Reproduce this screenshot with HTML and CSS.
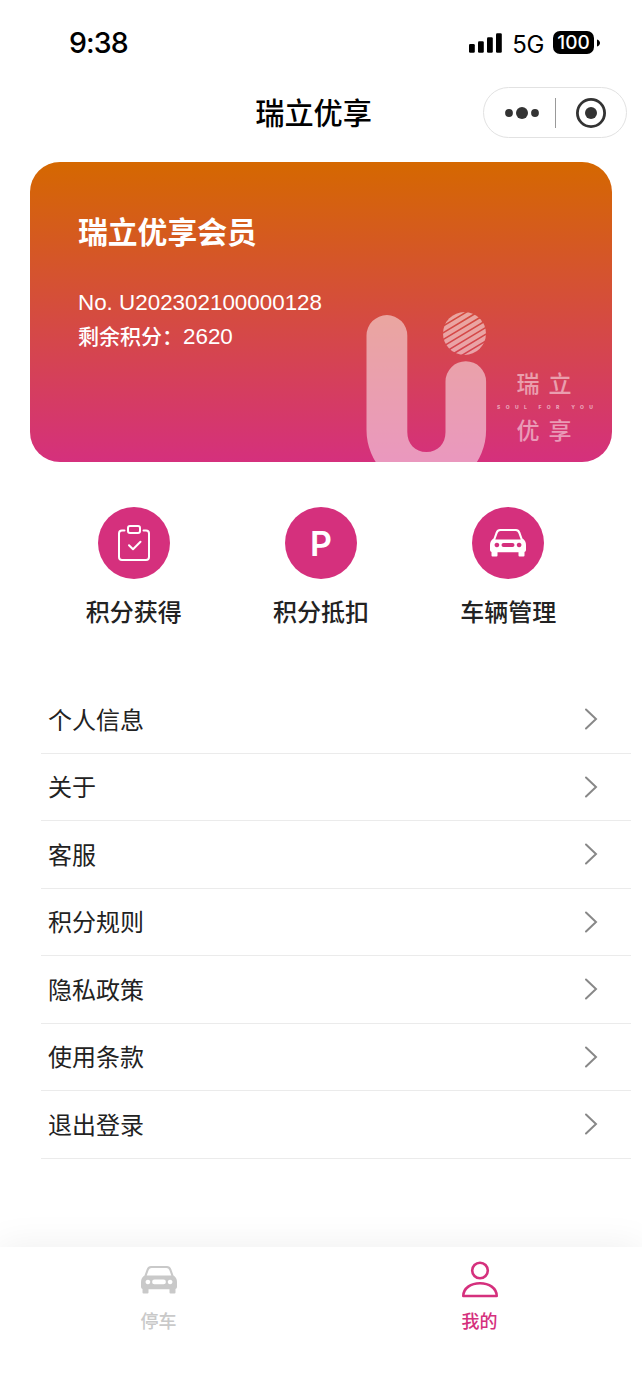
FILE: index.html
```
<!DOCTYPE html>
<html lang="zh-CN">
<head>
  <meta charset="UTF-8">
  <meta name="viewport" content="width=device-width, initial-scale=1.0">
  <title>瑞立优享</title>
  <link rel="stylesheet" href="styles.css">
</head>
<body>

<!-- Status bar -->
<div class="status-bar">
  <div class="time">9:38</div>
  <div class="status-icons">
    <svg class="signal" width="33" height="20" viewBox="0 0 33 20">
      <rect x="0" y="11" width="5.8" height="8.7" rx="1.3"/>
      <rect x="9" y="8.2" width="5.8" height="11.5" rx="1.3"/>
      <rect x="18" y="4.3" width="5.8" height="15.4" rx="1.3"/>
      <rect x="27" y="0.2" width="5.8" height="19.5" rx="1.3"/>
    </svg>
    <span class="network">5G</span>
    <span class="battery">100</span>
    <svg class="battery-tip" width="3" height="8" viewBox="0 0 3 8"><path d="M0 0.5C4 1.8 4 6.2 0 7.5Z"/></svg>
  </div>
</div>

<!-- Nav bar -->
<div class="nav-bar">
  <h1 class="nav-title">瑞立优享</h1>
  <div class="capsule">
    <svg width="34" height="14" viewBox="0 0 34 14">
      <circle cx="4" cy="7" r="3.9"/><circle cx="17" cy="7" r="6"/><circle cx="30" cy="7" r="3.9"/>
    </svg>
    <span class="capsule-line"></span>
    <svg width="32" height="32" viewBox="0 0 32 32">
      <circle cx="16" cy="16" r="13.6" fill="none" stroke="#333" stroke-width="2.8"/>
      <circle cx="16" cy="16" r="6"/>
    </svg>
  </div>
</div>

<!-- Member card -->
<div class="card">
  <h2 class="card-title">瑞立优享会员</h2>
  <div class="card-row number">No. U202302100000128</div>
  <div class="card-row">剩余积分：<span class="number">2620</span></div>
  <svg class="card-logo" width="262" height="172" viewBox="350 290 262 172">
    <defs>
      <clipPath id="ball"><circle cx="464.5" cy="333.5" r="21.5"/></clipPath>
    </defs>
    <path fill="#fff" fill-opacity=".5" d="M366.5 335.5a20.4 20.4 0 0 1 40.8 0V432C407.3 444 415 452 426.4 452S445.5 444 445.5 432V381.5a20.3 20.3 0 0 1 40.6 0V430a59.8 60 0 0 1-119.6 0Z"/>
    <g clip-path="url(#ball)">
      <g transform="rotate(-31 464.5 333.5)" stroke="#fff" stroke-opacity=".5" stroke-width="4.2" stroke-linecap="round">
        <path d="M440 313.2h50M440 319h42M440 324.800h46M440 330.600h44M440 336.400h50M445 342.200h50M446 348h50M440 353.800h50"/>
      </g>
    </g>
    <text class="logo-cn" x="516.5" y="392">瑞立</text>
    <text class="logo-cn" x="516.5" y="439">优享</text>
    <text class="logo-en" x="497" y="409" textLength="96">SOUL FOR YOU</text>
  </svg>
</div>

<!-- Shortcuts -->
<div class="actions">
  <div class="action">
    <div class="action-icon">
      <svg width="36" height="40" viewBox="0 0 36 40" fill="none" stroke="#fff" stroke-width="2" stroke-linecap="round" stroke-linejoin="round">
        <path d="M8.500 7.500H6A3 3 0 0 0 3 10.500V34A3 3 0 0 0 6 37H30A3 3 0 0 0 33 34V10.500A3 3 0 0 0 30 7.500H27.500"/>
        <rect x="12" y="3" width="12" height="7" rx="2"/>
        <path d="M13 22.300l4 4 7.500-7.500"/>
      </svg>
    </div>
    <div class="action-name">积分获得</div>
  </div>
  <div class="action">
    <div class="action-icon">P</div>
    <div class="action-name">积分抵扣</div>
  </div>
  <div class="action">
    <div class="action-icon">
      <svg width="36" height="28" viewBox="0 0 36 28" fill="currentColor" fill-rule="evenodd">
        <path d="M10 0H26Q29 0 30.200 3L32.500 9.500Q36 11.500 36 16V21Q36 22.500 34.500 23V26.500Q34.500 27.500 33.500 27.500H29.500Q28.500 27.500 28.500 26.500V23.300H7.500V26.500Q7.500 27.500 6.500 27.500H2.500Q1.500 27.500 1.500 26.500V23Q0 22.500 0 21V16Q0 11.500 3.500 9.500L5.800 3Q7 0 10 0ZM10.500 2Q8.500 2 7.700 4L5.300 10.500H30.700L28.300 4Q27.500 2 25.500 2ZM6.900 13.700a2.300 2.300 0 1 0 .01 0ZM29.100 13.700a2.300 2.300 0 1 0 .01 0ZM13.500 14H22.500a2 2 0 0 1 0 4H13.500a2 2 0 0 1 0-4Z"/>
      </svg>
    </div>
    <div class="action-name">车辆管理</div>
  </div>
</div>

<!-- Menu -->
<div class="menu">
  <div class="menu-item"><span>个人信息</span><svg class="arrow" viewBox="0 0 14 22"><path d="M2 1.500L12 11L2 20.500"/></svg></div>
  <div class="menu-item"><span>关于</span><svg class="arrow" viewBox="0 0 14 22"><path d="M2 1.500L12 11L2 20.500"/></svg></div>
  <div class="menu-item"><span>客服</span><svg class="arrow" viewBox="0 0 14 22"><path d="M2 1.500L12 11L2 20.500"/></svg></div>
  <div class="menu-item"><span>积分规则</span><svg class="arrow" viewBox="0 0 14 22"><path d="M2 1.500L12 11L2 20.500"/></svg></div>
  <div class="menu-item"><span>隐私政策</span><svg class="arrow" viewBox="0 0 14 22"><path d="M2 1.500L12 11L2 20.500"/></svg></div>
  <div class="menu-item"><span>使用条款</span><svg class="arrow" viewBox="0 0 14 22"><path d="M2 1.500L12 11L2 20.500"/></svg></div>
  <div class="menu-item"><span>退出登录</span><svg class="arrow" viewBox="0 0 14 22"><path d="M2 1.500L12 11L2 20.500"/></svg></div>
</div>

<!-- Tab bar -->
<div class="tab-bar">
  <div class="tab">
    <svg width="36" height="38" viewBox="0 -5 36 38" fill="currentColor" fill-rule="evenodd">
      <path d="M10 0H26Q29 0 30.200 3L32.500 9.500Q36 11.500 36 16V21Q36 22.500 34.500 23V26.500Q34.500 27.500 33.500 27.500H29.500Q28.500 27.500 28.500 26.500V23.300H7.500V26.500Q7.500 27.500 6.500 27.500H2.500Q1.500 27.500 1.500 26.500V23Q0 22.500 0 21V16Q0 11.500 3.500 9.500L5.800 3Q7 0 10 0ZM10.500 2Q8.500 2 7.700 4L5.700 9.500H30.300L28.300 4Q27.500 2 25.500 2ZM6.900 13.700a2.300 2.300 0 1 0 .01 0ZM29.100 13.700a2.300 2.300 0 1 0 .01 0ZM13.500 13.500H22.500a2.400 2.400 0 0 1 0 4.800H13.500a2.400 2.400 0 0 1 0-4.800Z"/>
    </svg>
    <span>停车</span>
  </div>
  <div class="tab active">
    <svg width="36" height="38" viewBox="0 0 36 38" fill="none" stroke="currentColor" stroke-width="2.600" stroke-linejoin="round">
      <circle cx="18" cy="9.500" r="7.800"/>
      <path d="M1.300 35C1.300 27 9 22.200 18 22.200S34.700 27 34.700 35Z"/>
    </svg>
    <span>我的</span>
  </div>
</div>

</body>
</html>
```
FILE: styles.css
```
* {
  box-sizing: border-box;
}

body {
  margin: 0;
  height: 1389px;
  display: flex;
  flex-direction: column;
  overflow: hidden;
  background-color: #fff;
  color: #222;
  font-family: "Noto Sans CJK SC", sans-serif;
}

.status-bar {
  display: flex;
  justify-content: space-between;
  align-items: center;
  height: 85px;
  padding: 0 42px 0 69px;
  color: #000;
  font-family: Inter, sans-serif;
}

.time {
  font-size: 28.5px;
  font-weight: 500;
  letter-spacing: -0.9px;
}

.status-icons {
  display: flex;
  align-items: center;
}

.network {
  margin: 3px 0 0 10px;
  font-size: 24px;
  letter-spacing: -0.4px;
}

.battery {
  width: 41px;
  height: 23px;
  margin-left: 9px;
  border-radius: 7px;
  background-color: #000;
  color: #fff;
  font-size: 19px;
  font-weight: 500;
  line-height: 23px;
  text-align: center;
}

.battery-tip {
  margin-left: 3px;
}

.nav-bar {
  display: flex;
  justify-content: flex-end;
  align-items: center;
  height: 55px;
  padding-right: 15px;
}

.nav-title {
  margin: 0 111px 4px 0;
  color: #000;
  font-size: 29.2px;
  font-weight: 500;
  line-height: 40px;
}

.capsule {
  display: flex;
  align-items: center;
  width: 144px;
  height: 51px;
  padding-left: 21px;
  border: 1px solid #e2e2e2;
  border-radius: 26px;
  fill: #333;
}

.capsule-line {
  width: 1px;
  height: 30px;
  margin: 0 19px 0 16px;
  background-color: #999;
}

/* Member card, logo sits over the bottom right corner */
.card {
  position: relative;
  height: 300px;
  margin: 22px 30px 0;
  padding: 47px 48px;
  border-radius: 30px;
  overflow: hidden;
  background: linear-gradient(#d56800, #d5307d);
  color: #fff;
}

.card-title {
  margin: 0 0 35px;
  font-size: 29.8px;
  font-weight: 700;
  line-height: 42px;
}

.card-row {
  height: 33px;
  font-size: 21px;
  font-weight: 500;
  line-height: 33px;
}

.number {
  font-family: "Liberation Sans", Arial, sans-serif;
  font-size: 22.4px;
  font-weight: 400;
}

.card-logo {
  position: absolute;
  right: 0;
  bottom: 0;
}

.logo-cn {
  font-size: 23px;
  font-weight: 500;
  letter-spacing: 9px;
  fill: rgba(255, 255, 255, 0.5);
}

.logo-en {
  font-family: Inter, sans-serif;
  font-size: 5px;
  font-weight: 800;
  fill: rgba(255, 255, 255, 0.55);
}

.actions {
  display: flex;
  padding: 45px 40px 0 40px;
}

.action {
  flex: 1;
  display: flex;
  flex-direction: column;
  align-items: center;
}

.action-icon {
  display: flex;
  justify-content: center;
  align-items: center;
  width: 72px;
  height: 72px;
  border-radius: 50%;
  background-color: #d5307d;
  color: #fff;
  font-family: Inter, sans-serif;
  font-size: 34px;
  font-weight: 600;
}

.action-name {
  margin-top: 14px;
  font-size: 24px;
  font-weight: 500;
  line-height: 36px;
}

.menu {
  margin: 57px 11px 0 41px;
}

.menu-item {
  display: flex;
  justify-content: space-between;
  align-items: center;
  height: 67.5px;
  padding: 0 33px 0 7px;
  border-bottom: 1.5px solid #ebebeb;
  font-size: 24px;
}

.menu-item span {
  margin-bottom: 2px;
}

.arrow {
  width: 14px;
  height: 22px;
  fill: none;
  stroke: #888;
  stroke-width: 2;
  stroke-linecap: round;
}

.tab-bar {
  display: flex;
  height: 142px;
  margin: auto 0 0 -2px;
  padding: 14px 2px 0 0;
  background-color: #fff;
  box-shadow: 0 0 36px rgba(0, 0, 0, 0.07);
}

.tab {
  flex: 1;
  display: flex;
  flex-direction: column;
  align-items: center;
  color: #c9c9c9;
  font-size: 18px;
  font-weight: 500;
}

.tab span {
  margin-top: 8px;
  line-height: 26px;
}

.tab.active {
  color: #d5307d;
}
```
